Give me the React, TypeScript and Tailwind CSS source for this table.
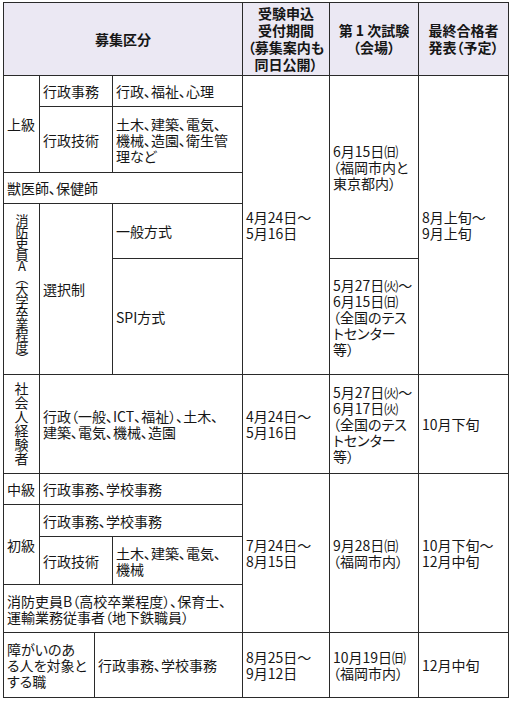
import React from "react";

const td = "border border-[#2a2a2a] px-[3px] py-0 align-middle text-left whitespace-nowrap";
const th = "border border-[#2a2a2a] px-[2px] py-0 align-middle text-center font-bold bg-[#ebe8f3] leading-[17px] whitespace-nowrap";

function Lines({ lines }: { lines: string[] }) {
  return (
    <>
      {lines.map((l, i) => (
        <React.Fragment key={i}>
          {l}
          {i < lines.length - 1 && <br />}
        </React.Fragment>
      ))}
    </>
  );
}

export default function App() {
  return (
    <div className="w-[515px] h-[705px] bg-white pt-[2px] pl-[3px] font-['Noto_Sans_CJK_JP',sans-serif] text-[14px] leading-[16px] text-[#161616] [font-feature-settings:'palt']">
      <table className="border-collapse table-fixed w-[505px]">
        <colgroup>
          <col className="w-[36px]" />
          <col className="w-[55px]" />
          <col className="w-[18px]" />
          <col className="w-[130px]" />
          <col className="w-[87px]" />
          <col className="w-[89px]" />
          <col className="w-[90px]" />
        </colgroup>
        <tbody>
          <tr className="h-[73px]">
            <th colSpan={4} className={th}>募集区分</th>
            <th className={th}>
              <Lines lines={["受験申込", "受付期間", "（募集案内も", "同日公開）"]} />
            </th>
            <th className={th}>
              <Lines lines={["第 1 次試験", "（会場）"]} />
            </th>
            <th className={th}>
              <Lines lines={["最終合格者", "発表（予定）"]} />
            </th>
          </tr>
          <tr className="h-[31px]">
            <td rowSpan={2} className={`${td} px-[1px]`}>上級</td>
            <td colSpan={2} className={td}>行政事務</td>
            <td className={td}>行政、福祉、心理</td>
            <td rowSpan={5} className={td}>
              <Lines lines={["4月24日～", "5月16日"]} />
            </td>
            <td rowSpan={4} className={td}>
              <Lines lines={["6月15日㈰", "（福岡市内と", "東京都内）"]} />
            </td>
            <td rowSpan={5} className={td}>
              <Lines lines={["8月上旬～", "9月上旬"]} />
            </td>
          </tr>
          <tr className="h-[66px]">
            <td colSpan={2} className={td}>行政技術</td>
            <td className={td}>
              <Lines lines={["土木、建築、電気、", "機械、造園、衛生管", "理など"]} />
            </td>
          </tr>
          <tr className="h-[31px]">
            <td colSpan={4} className={td}>獣医師、保健師</td>
          </tr>
          <tr className="h-[55px]">
            <td rowSpan={2} className={`${td} px-0`}>
              <div className="flex justify-center">
                <span className="[writing-mode:vertical-rl] [text-orientation:upright] text-[13px] leading-[14px] tracking-[-1.5px] [font-feature-settings:normal]">
                  消防吏員A（大学卒業程度）
                </span>
              </div>
            </td>
            <td rowSpan={2} colSpan={2} className={td}>選択制</td>
            <td className={td}>一般方式</td>
          </tr>
          <tr className="h-[116px]">
            <td className={td}>SPI方式</td>
            <td className={td}>
              <Lines lines={["5月27日㈫～", "6月15日㈰", "（全国のテス", "トセンター", "等）"]} />
            </td>
          </tr>
          <tr className="h-[99px]">
            <td className={`${td} px-0`}>
              <div className="flex justify-center">
                <span className="[writing-mode:vertical-rl] [text-orientation:upright] text-[14px] leading-[14px] [font-feature-settings:normal]">
                  社会人経験者
                </span>
              </div>
            </td>
            <td colSpan={3} className={td}>
              <Lines lines={["行政（一般、ICT、福祉）、土木、", "建築、電気、機械、造園"]} />
            </td>
            <td className={td}>
              <Lines lines={["4月24日～", "5月16日"]} />
            </td>
            <td className={td}>
              <Lines lines={["5月27日㈫～", "6月17日㈫", "（全国のテス", "トセンター", "等）"]} />
            </td>
            <td className={td}>10月下旬</td>
          </tr>
          <tr className="h-[31px]">
            <td className={`${td} px-[1px]`}>中級</td>
            <td colSpan={3} className={td}>行政事務、学校事務</td>
            <td rowSpan={4} className={td}>
              <Lines lines={["7月24日～", "8月15日"]} />
            </td>
            <td rowSpan={4} className={td}>
              <Lines lines={["9月28日㈰", "（福岡市内）"]} />
            </td>
            <td rowSpan={4} className={td}>
              <Lines lines={["10月下旬～", "12月中旬"]} />
            </td>
          </tr>
          <tr className="h-[32px]">
            <td rowSpan={2} className={`${td} px-[1px]`}>初級</td>
            <td colSpan={3} className={td}>行政事務、学校事務</td>
          </tr>
          <tr className="h-[48px]">
            <td colSpan={2} className={td}>行政技術</td>
            <td className={td}>
              <Lines lines={["土木、建築、電気、", "機械"]} />
            </td>
          </tr>
          <tr className="h-[48px]">
            <td colSpan={4} className={td}>
              <Lines lines={["消防吏員B（高校卒業程度）、保育士、", "運輸業務従事者（地下鉄職員）"]} />
            </td>
          </tr>
          <tr className="h-[65px]">
            <td colSpan={2} className={`${td} px-[1px]`}>
              <Lines lines={["障がいのあ", "る人を対象と", "する職"]} />
            </td>
            <td colSpan={2} className={td}>行政事務、学校事務</td>
            <td className={td}>
              <Lines lines={["8月25日～", "9月12日"]} />
            </td>
            <td className={td}>
              <Lines lines={["10月19日㈰", "（福岡市内）"]} />
            </td>
            <td className={td}>12月中旬</td>
          </tr>
        </tbody>
      </table>
    </div>
  );
}
